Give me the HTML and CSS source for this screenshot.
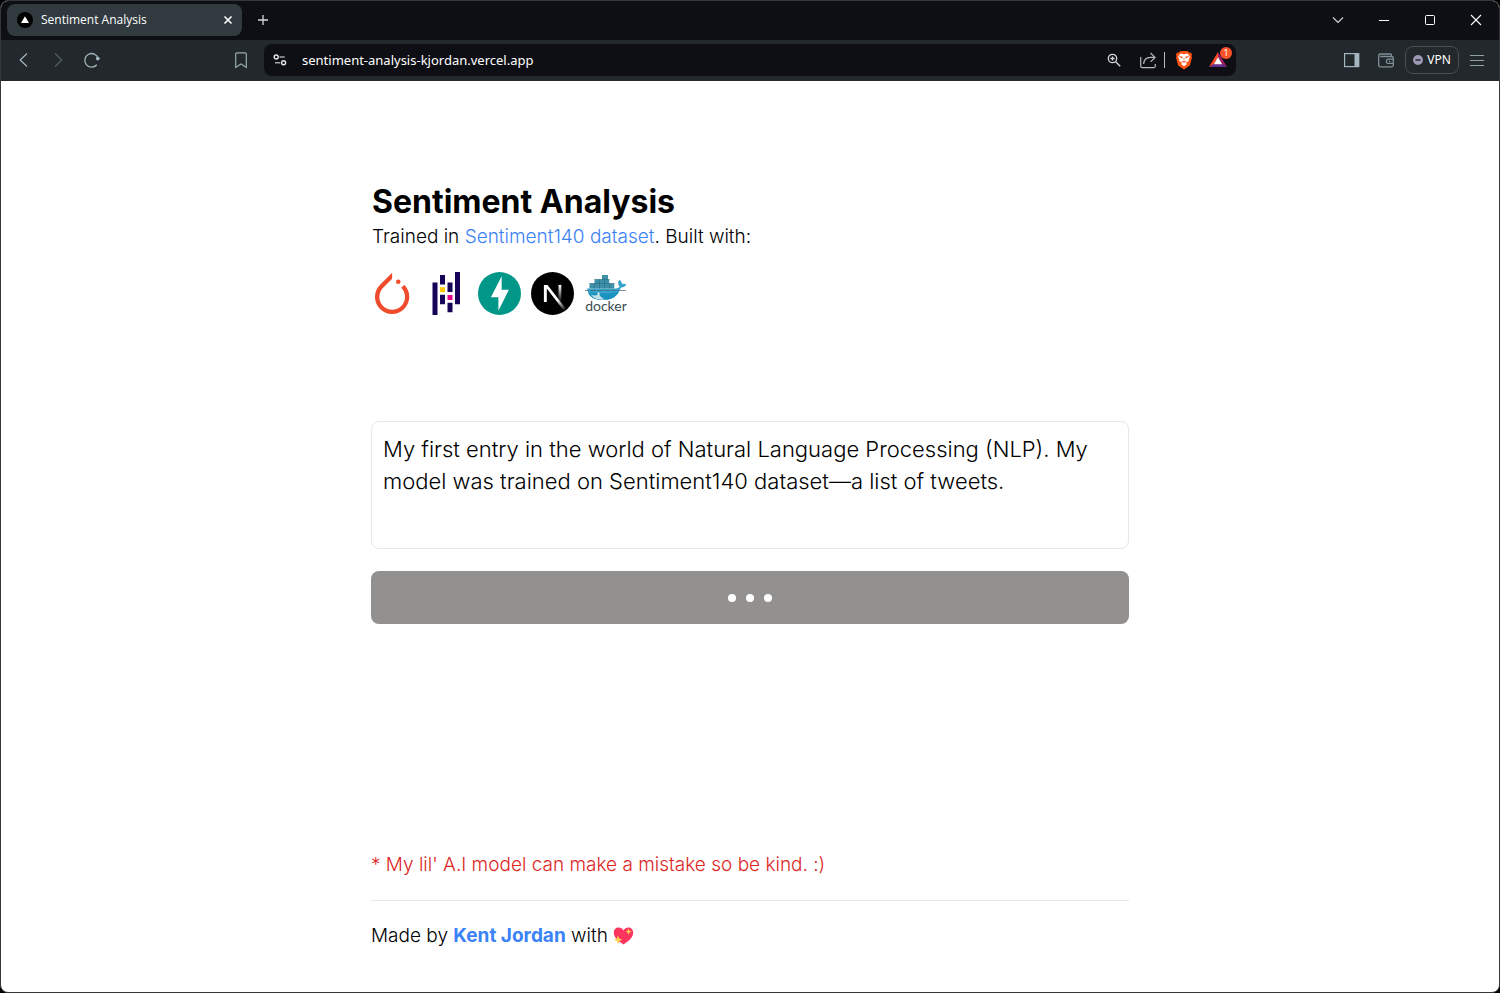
FILE: index.html
```html
<!DOCTYPE html>
<html lang="en">
<head>
<meta charset="utf-8">
<title>Sentiment Analysis</title>
<meta name="viewport" content="width=device-width, initial-scale=1">
<link rel="stylesheet" href="styles.css">
</head>
<body>
<div class="window">
  <header class="chrome">
    <div class="tabbar">
      <div class="tab">
        <svg class="favicon" width="16" height="16" viewBox="0 0 16 16"><circle cx="8" cy="8" r="8" fill="#000"/><path d="M8 4.2 12 11H4z" fill="#fff"/></svg>
        <span class="tab-title">Sentiment Analysis</span>
        <button class="icon-btn tab-close" aria-label="Close tab"><svg width="10" height="10" viewBox="0 0 10 10"><path d="M1.5 1.5l7 7m0-7l-7 7" stroke="#fff" stroke-width="1.6"/></svg></button>
      </div>
      <button class="icon-btn new-tab" aria-label="New tab"><svg width="12" height="12" viewBox="0 0 12 12"><path d="M6 1v10M1 6h10" stroke="#d5d8da" stroke-width="1.3"/></svg></button>
      <div class="window-controls">
        <button class="icon-btn" aria-label="Search tabs"><svg width="12" height="12" viewBox="0 0 12 12" fill="none"><path d="M1 3.5l5 5 5-5" stroke="#d5d8da" stroke-width="1.1"/></svg></button>
        <button class="icon-btn" aria-label="Minimize"><svg width="12" height="12" viewBox="0 0 12 12"><path d="M1 6.5h10" stroke="#fff"/></svg></button>
        <button class="icon-btn" aria-label="Maximize"><svg width="12" height="12" viewBox="0 0 12 12" fill="none"><rect x="1.5" y="1.5" width="9" height="9" rx="1" stroke="#fff"/></svg></button>
        <button class="icon-btn" aria-label="Close"><svg width="12" height="12" viewBox="0 0 12 12"><path d="M1 1l10 10m0-10L1 11" stroke="#fff" stroke-width="1.1"/></svg></button>
      </div>
    </div>
    <div class="toolbar">
      <div class="nav">
        <button class="icon-btn" aria-label="Back"><svg width="18" height="18" viewBox="0 0 18 18" fill="none"><path d="M12 2.5L5.2 9l6.8 6.5" stroke="#a4b6be" stroke-width="1.2"/></svg></button>
        <button class="icon-btn" aria-label="Forward"><svg width="18" height="18" viewBox="0 0 18 18" fill="none"><path d="M6 2.5L12.8 9 6 15.5" stroke="#536067" stroke-width="1.2"/></svg></button>
        <button class="icon-btn" aria-label="Reload"><svg width="18" height="18" viewBox="0 0 18 18" fill="none"><path d="M15.200 7.500A6.800 6.800 0 1 0 13.800 13.800" stroke="#a4b6be" stroke-width="1.3"/><circle cx="14.800" cy="7.600" r="1.900" fill="#a4b6be"/></svg></button>
      </div>
      <button class="icon-btn bookmark" aria-label="Bookmark"><svg width="18" height="18" viewBox="0 0 18 18" fill="none"><path d="M3.7 2.8a1 1 0 0 1 1-1h8.600a1 1 0 0 1 1 1v13.600L9 12.900l-5.300 3.500z" stroke="#9aaab2" stroke-width="1.2"/></svg></button>
      <div class="address">
        <button class="icon-btn site-info" aria-label="Site information"><svg width="14" height="14" viewBox="0 0 14 14" fill="none"><circle cx="3.2" cy="4" r="2" stroke="#e5e7e9" stroke-width="1.4"/><path d="M6.500 4h5.200M2 9.800h5.200" stroke="#a4a7aa" stroke-width="1.5"/><circle cx="10.6" cy="9.8" r="2" stroke="#e5e7e9" stroke-width="1.4"/></svg></button>
        <input class="url" type="text" aria-label="Address" value="sentiment-analysis-kjordan.vercel.app">
        <div class="address-tools">
          <button class="icon-btn" aria-label="Zoom"><svg width="14" height="14" viewBox="0 0 14 14" fill="none" stroke="#d5d7da" stroke-width="1.3"><circle cx="5.5" cy="5.5" r="4.2"/><path d="M8.7 8.7l4.5 4.5M5.5 3.4v4.2M3.4 5.5h4.2"/></svg></button>
          <button class="icon-btn" aria-label="Share"><svg width="18" height="18" viewBox="0 0 18 18" fill="none" stroke="#b5b9bd" stroke-width="1.2"><path d="M1.7 6v9a1.6 1.6 0 0 0 1.6 1.6h11.400a1.600 1.600 0 0 0 1.600-1.600v-2M4.600 13c.3-4.200 3-6.600 6.900-6.600h4M11.600 2l4.400 4.400-4.400 4.400"/></svg></button>
          <span class="divider"></span>
          <button class="icon-btn" aria-label="Brave Shields"><svg width="18" height="20" viewBox="0 0 18 20"><path d="M5.500 1h7l1.700 1.700 1.600-.1 1.200 2-.5 1.600.5 1.400-2.200 8L9 19.600 3.200 15.600 1 7.600l.5-1.400L1 4.600l1.200-2 1.600.1z" fill="#fb5414"/><path d="M5.600 3.600L9 4.200l3.400-.6 2.500 3-1.300 3.100.2 1.300-2.900 1.700L12 14l-3 2.200L6 14l1.100-1.300L4.200 11l.2-1.300-1.300-3.100z" fill="#fff"/><path d="M4.500 6.300l3 .8-.5 1.100zM13.500 6.300l-3 .8.500 1.100zM9 8v2.700M6.700 11.300L9 12.400l2.300-1.100" fill="#fb5414" stroke="#fb5414" stroke-width=".6"/></svg></button>
          <button class="icon-btn rewards" aria-label="Brave Rewards, 1 notification"><svg width="18" height="16" viewBox="0 0 18 16"><path d="M9 0L0 15l4.800-2.800L9 5z" fill="#ff4724"/><path d="M9 0l9 15-4.800-2.800L9 5z" fill="#9e1f63"/><path d="M0 15h18l-4.800-3H4.800z" fill="#662d91"/><path d="M9 5l4.200 7.200H4.800z" fill="#fff"/></svg><span class="badge">1</span></button>
        </div>
      </div>
      <div class="actions">
        <button class="icon-btn" aria-label="Sidebar"><svg width="18" height="18" viewBox="0 0 18 18"><rect x="1.600" y="2.600" width="14" height="13" fill="none" stroke="#a4b6be" stroke-width="1.200"/><path d="M11.500 2h4.700v14h-4.700z" fill="#a4b6be"/></svg></button>
        <button class="icon-btn" aria-label="Wallet"><svg width="18" height="18" viewBox="0 0 18 18" fill="none" stroke="#7f8f97" stroke-width="1.300"><path d="M14.500 5.500V4a1 1 0 0 0-1-1H3.200a1.500 1.500 0 0 0-1.500 1.500v9.800a1.500 1.500 0 0 0 1.500 1.500h11.600a1.500 1.500 0 0 0 1.500-1.500V7a1.500 1.500 0 0 0-1.500-1.500H3.200M16 8.200h-5a1.500 1.500 0 0 0-1.500 1.500v1.200a1.500 1.500 0 0 0 1.500 1.500h5M12 10.300h1.500"/></svg></button>
        <button class="vpn"><svg width="10" height="10" viewBox="0 0 10 10"><circle cx="5" cy="5" r="5" fill="#9c98b5"/><path d="M2.500 5h5" stroke="#22282c" stroke-width="1.300"/></svg>VPN</button>
        <button class="icon-btn" aria-label="Menu"><svg width="14" height="12" viewBox="0 0 14 12"><path d="M0 1.500h14M0 6.500h14M0 11.500h14" stroke="#8fa0a8"/></svg></button>
      </div>
    </div>
  </header>

  <main class="page">
    <section class="intro">
      <h1>Sentiment Analysis</h1>
      <p>Trained in <a href="#">Sentiment140 dataset</a>. Built with:</p>
      <ul class="logos">
        <li><svg width="43" height="43" viewBox="0 0 25 25" role="img" aria-label="PyTorch"><g transform="translate(-.3 .4)"><path d="M12.005 0L4.952 7.053a9.865 9.865 0 000 14.022 9.866 9.866 0 0014.022 0c3.984-3.900 3.986-10.205.085-14.023l-1.744 1.743c2.904 2.905 2.904 7.634 0 10.538s-7.634 2.904-10.538 0-2.904-7.634 0-10.538l4.647-4.646.582-.665z" fill="#ee4c2c"/><circle cx="15.573" cy="5.226" r="1.327" fill="#ee4c2c"/></g></svg></li>
        <li><svg width="43" height="43" viewBox="0 0 43 43" role="img" aria-label="pandas"><path d="M7.500 10.500h5V43h-5zM15 3h5v9.500h-5zM15 22.700h5v9.600h-5zM22.500 10.500h5v9.600h-5zM22.500 30.700h5v9.600h-5zM30 0h5v32.300h-5z" fill="#150458"/><path d="M15 15.200h5v5h-5z" fill="#ffca00"/><path d="M22.500 23h5v5h-5z" fill="#e70488"/></svg></li>
        <li><svg width="43" height="43" viewBox="0 0 24 24" role="img" aria-label="FastAPI"><circle cx="12" cy="12" r="12" fill="#009688"/><path d="M11.382 21.620v-7.528H7.190L13.203 2.380v7.528h4.029z" fill="#fff"/></svg></li>
        <li><svg width="43" height="43" viewBox="0 0 180 180" role="img" aria-label="Next.js"><defs><linearGradient id="n1" x1="109" y1="116.500" x2="144.500" y2="160.500" gradientUnits="userSpaceOnUse"><stop stop-color="#fff"/><stop offset="1" stop-color="#fff" stop-opacity="0"/></linearGradient><linearGradient id="n2" x1="121" y1="54" x2="120.800" y2="126" gradientUnits="userSpaceOnUse"><stop stop-color="#fff"/><stop offset="1" stop-color="#fff" stop-opacity="0"/></linearGradient></defs><circle cx="90" cy="90" r="90"/><path d="M149.508 157.520L69.142 54H54v71.970h12.114V69.384L139.999 164.845a90 90 0 0 0 9.509-7.325z" fill="url(#n1)"/><path d="M115 54h12v72h-12z" fill="url(#n2)"/></svg></li>
        <li><svg width="43" height="43" viewBox="0 0 43 43" role="img" aria-label="Docker"><path d="M3 16.500h29c2-.2 3-1 3.600-2-1.900-2-1.900-4.600-.4-6.800 2 1.300 2.700 2.600 2.800 4.300 1.500-.3 3-.1 4.400.6-1 2-2.800 3-5.600 3.100C34 23.500 28.500 28 19 28 9.500 28 5 24.500 3 16.500z" fill="#36a3cc"/><path d="M4 20.300c9 1.500 20 1.300 31-.3-3 5-8 8-15.500 8C11 28 5.700 25.500 4 20.300z" fill="#1b93c0"/><path d="M7 22.500c3 1.500 5.500 1.200 8-.7 1.500 3.400 3.500 5 6.500 5.700-7 .6-12-.7-14.500-5z" fill="#c3dfe9"/><path d="M1 18.500h4m1 0h6m1 0h6m1 0h6m1 0h6m1 0h8" stroke="#456274" stroke-width=".7"/><path d="M5.500 11.500h24.800v5H5.500zM10.500 7.500h14.800v4H10.500zM18 3h6v4.500h-6z" fill="#3e8fa8"/><path d="M10.500 11.500v5m5-9v9m5-9v9m5-5v5M5.500 11.500h25M10.500 7.500h15" stroke="#286a82" stroke-width=".6" fill="none"/><circle cx="14.500" cy="21.500" r="1" fill="#fff"/><text x="22" y="39" text-anchor="middle" class="docker-word">docker</text></svg></li>
      </ul>
    </section>

    <form class="analyzer">
      <textarea aria-label="Text to analyze" spellcheck="false">My first entry in the world of Natural Language Processing (NLP). My model was trained on Sentiment140 dataset—a list of tweets.</textarea>
      <button type="button" class="submit" aria-label="Analyzing"><i class="dot"></i><i class="dot"></i><i class="dot"></i></button>
    </form>

    <footer class="footer">
      <p class="notice">* My lil' A.I model can make a mistake so be kind. :)</p>
      <p class="credit">Made by <a href="#">Kent Jordan</a> with <svg class="heart" width="21" height="20" viewBox="0 0 21 20" role="img" aria-label="love"><path d="M10.500 18.500C5 15 .8 11.500.8 6.600.8 3.500 3 1.500 5.600 1.500c2.200 0 4 1.200 4.900 3 .9-1.800 2.700-3 4.900-3 2.600 0 4.800 2 4.800 5.100 0 4.900-4.200 8.400-9.700 11.900z" fill="#fb3460"/><path d="M15.600 2.500l.9 2.300 2.300.9-2.300.9-.9 2.300-.9-2.300-2.300-.9 2.300-.9zM5 9.500l1.200 3.100 3.100 1.200L6.200 15 5 18.200 3.800 15l-3.100-1.200 3.100-1.200z" fill="#ffd34d"/></svg></p>
    </footer>
  </main>
</div>
</body>
</html>
```

FILE: styles.css
```css
* {
  box-sizing: border-box;
}

body {
  margin: 0;
  background: #000;
  font-family: Inter, sans-serif;
  color: #000;
}

h1, p, ul {
  margin: 0;
  padding: 0;
}

button, input, textarea {
  font: inherit;
  color: inherit;
}

.window {
  min-height: 100vh;
  display: flex;
  flex-direction: column;
  border: 1px solid #35383b;
  border-radius: 8px;
  overflow: hidden;
  background: #fff;
}

/* Browser chrome */
.chrome {
  font-family: "Noto Sans", "Open Sans", sans-serif;
  color: #fff;
}

.icon-btn {
  display: flex;
  align-items: center;
  justify-content: center;
  flex: none;
  padding: 0;
  border: 0;
  background: none;
}

.tabbar {
  display: flex;
  align-items: center;
  height: 39px;
  padding: 0 0 2px 6px;
  background: #0e0f14;
}

.tab {
  display: flex;
  align-items: center;
  gap: 8px;
  width: 235px;
  height: 32px;
  padding: 0 9px 0 10px;
  border-radius: 8px;
  background: #303a3f;
}

.tab-title {
  flex: 1;
  font-family: "Open Sans", sans-serif;
  font-size: 12px;
  line-height: 16px;
}

.new-tab {
  width: 30px;
  height: 30px;
  margin-left: 6px;
}

.window-controls {
  display: flex;
  margin-left: auto;
}

.window-controls .icon-btn {
  width: 46px;
  height: 36px;
}

.toolbar {
  display: flex;
  align-items: center;
  height: 41px;
  padding-bottom: 2px;
  background: #22282c;
}

.nav {
  display: flex;
  gap: 16px;
  padding-left: 14px;
}

.bookmark {
  margin-left: 131px;
}

.address {
  display: flex;
  align-items: center;
  flex: 1;
  height: 32px;
  margin-left: 14px;
  padding: 0 8px 0 9px;
  border-radius: 8px;
  background: #0e0f14;
}

.url {
  flex: 1;
  min-width: 0;
  margin-left: 15px;
  padding: 0;
  border: 0;
  outline: 0;
  background: none;
  font-size: 13px;
}

.address-tools {
  display: flex;
  align-items: center;
}

.address-tools .icon-btn + .icon-btn {
  margin-left: 18px;
}

.divider {
  width: 1px;
  height: 16px;
  margin: 0 10px 0 7px;
  background: #b5b9bd;
}

.address-tools .rewards.icon-btn {
  position: relative;
  margin-left: 16px;
  margin-right: 1px;
}

.badge {
  position: absolute;
  top: -5px;
  right: -5px;
  width: 12px;
  height: 12px;
  border-radius: 6px;
  background: #fb542b;
  font-size: 9px;
  line-height: 12px;
}

.actions {
  display: flex;
  align-items: center;
  gap: 16px;
  padding: 0 15px 0 107px;
}

.vpn {
  display: flex;
  align-items: center;
  justify-content: center;
  gap: 4px;
  width: 54px;
  height: 28px;
  margin: 0 -5px 0 -6px;
  padding: 0;
  border: 1px solid #465157;
  border-radius: 8px;
  background: none;
  font-size: 12px;
}

/* Page */
.page {
  flex: 1;
  display: flex;
  flex-direction: column;
  width: 100%;
  max-width: 758px;
  margin: 0 auto;
  padding: 99px 0 42px;
  font-size: 19px;
  line-height: 28px;
  font-weight: 300;
}

.intro {
  padding-left: 1px;
}

h1 {
  font-size: 32px;
  line-height: 43px;
  font-weight: 700;
}

a {
  color: #3b82f6;
  text-decoration: none;
}

.logos {
  display: flex;
  gap: 10px;
  margin-top: 21px;
  list-style: none;
}

.logos svg {
  display: block;
}

.docker-word {
  font-family: Lato, sans-serif;
  font-size: 14px;
  font-weight: 400;
  fill: #394d54;
}

.analyzer {
  display: flex;
  flex-direction: column;
  gap: 22px;
  margin-top: 106px;
}

textarea {
  display: block;
  width: 100%;
  height: 128px;
  padding: 11px;
  border: 1px solid #e5e7eb;
  border-radius: 8px;
  outline: 0;
  resize: none;
  background: #fff;
  font-size: 22px;
  line-height: 32px;
  font-weight: 300;
}

.submit {
  display: flex;
  align-items: center;
  justify-content: center;
  gap: 10px;
  height: 53px;
  border: 0;
  border-radius: 8px;
  background: #93918f;
}

.dot {
  width: 8px;
  height: 8px;
  border-radius: 50%;
  background: #fff;
}

.footer {
  margin-top: auto;
}

.notice {
  padding-bottom: 21px;
  border-bottom: 1px solid #e5e7eb;
  color: #dc2626;
}

.credit {
  padding-top: 21px;
}

.credit a {
  font-weight: 700;
}

.heart {
  vertical-align: -4px;
}
```
